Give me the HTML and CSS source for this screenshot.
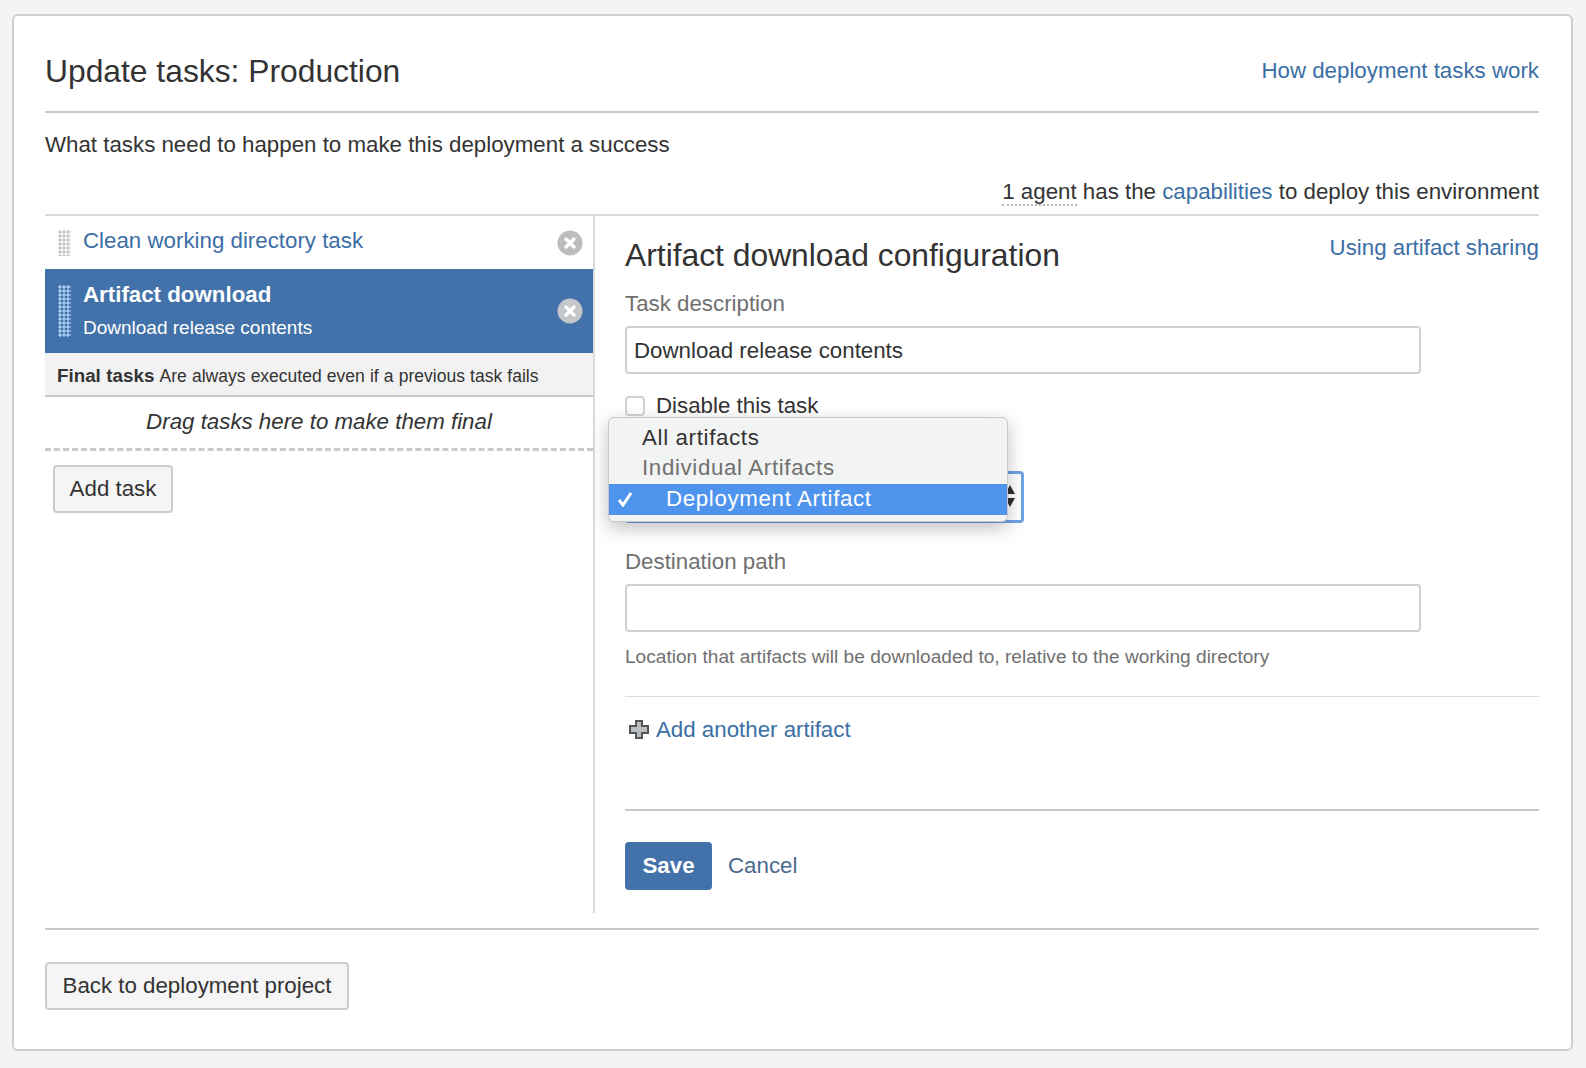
FILE: index.html
```html
<!DOCTYPE html>
<html lang="en">
<head>
    <meta charset="UTF-8">
    <meta name="viewport" content="width=device-width, initial-scale=1.0">
    <title>Update tasks: Production</title>
    <link rel="stylesheet" href="styles.css">
</head>
<body>

    <div class="card">
        <div class="page-head">
            <h1>Update tasks: Production</h1>
            <a href="#" class="link">How deployment tasks work</a>
        </div>

        <p class="intro">What tasks need to happen to make this deployment a success</p>
        <p class="agents"><span class="dotted">1 agent</span> has the <a href="#" class="link">capabilities</a> to deploy this environment</p>

        <div class="columns">
            <div class="task-col">
                <div class="task-row">
                    <span class="handle"></span>
                    <span class="task-name">Clean working directory task</span>
                    <span class="remove">
                        <svg width="26" height="26" viewBox="0 0 26 26"><circle cx="13" cy="13" r="12.5" fill="#bdbdbd"/><path d="M9 9l8 8M17 9l-8 8" stroke="#fff" stroke-width="3.4" stroke-linecap="round"/></svg>
                    </span>
                </div>
                <div class="task-row selected">
                    <span class="handle"></span>
                    <div class="task-text">
                        <strong>Artifact download</strong>
                        <small>Download release contents</small>
                    </div>
                    <span class="remove">
                        <svg width="26" height="26" viewBox="0 0 26 26"><circle cx="13" cy="13" r="12.5" fill="#c4c7ca"/><path d="M9 9l8 8M17 9l-8 8" stroke="#fff" stroke-width="3.4" stroke-linecap="round"/></svg>
                    </span>
                </div>
                <div class="final-head"><b>Final tasks</b> Are always executed even if a previous task fails</div>
                <div class="final-drop">Drag tasks here to make them final</div>
                <button type="button" class="btn add-task">Add task</button>
            </div>

            <div class="config-col">
                <div class="config-head">
                    <h2>Artifact download configuration</h2>
                    <a href="#" class="link">Using artifact sharing</a>
                </div>

                <label class="field-label">Task description</label>
                <div class="text-input">Download release contents</div>

                <div class="check-row">
                    <span class="checkbox"></span>
                    <span>Disable this task</span>
                </div>

                <div class="select-box">
                    <span class="select-arrows">
                        <svg width="10" height="22" viewBox="0 0 10 22"><path d="M5 0l5 9H0zM5 22L0 13h10z" fill="#333"/></svg>
                    </span>
                    <div class="dropdown">
                        <div class="opt">All artifacts</div>
                        <div class="opt group">Individual Artifacts</div>
                        <div class="opt active">
                            <svg class="tick" width="16" height="16" viewBox="0 0 16 16"><path d="M2 9l4 5 8-12" fill="none" stroke="#fff" stroke-width="3"/></svg>
                            Deployment Artifact
                        </div>
                    </div>
                </div>

                <label class="field-label dest-label">Destination path</label>
                <div class="text-input"></div>
                <p class="hint">Location that artifacts will be downloaded to, relative to the working directory</p>

                <div class="add-row">
                    <svg width="20" height="19" viewBox="0 0 20 19"><path d="M7 1h6v5h6v7h-6v5H7v-5H1V6h6z" fill="#b9bdc0" stroke="#555" stroke-width="2"/></svg>
                    <a href="#" class="link">Add another artifact</a>
                </div>

                <div class="form-actions">
                    <button type="button" class="save">Save</button>
                    <a href="#" class="cancel">Cancel</a>
                </div>
            </div>
        </div>

        <div class="page-foot">
            <button type="button" class="btn">Back to deployment project</button>
        </div>
    </div>

</body>
</html>
```

FILE: styles.css
```css
* {
    box-sizing: border-box;
}
body {
    margin: 0;
    height: 1068px;
    overflow: hidden;
    background-color: #f3f5f5;
    color: #333;
    font-family: "Liberation Sans", Arial, sans-serif;
    font-size: 22.3px;
}
.link {
    color: #3b6ea5;
    text-decoration: none;
}
.card {
    width: 1561px;
    height: 1037px;
    margin: 14px 0 0 12px;
    padding: 0 32px 0 31px;
    background-color: #fff;
    border: 2px solid #ccd0d3;
    border-radius: 6px;
}
.page-head {
    height: 97px;
    padding-top: 36px;
    display: flex;
    justify-content: space-between;
    align-items: flex-start;
    border-bottom: 2px solid #c6cacd;
}
h1 {
    margin: 0;
    font-size: 31.8px;
    line-height: 38px;
    font-weight: normal;
}
.page-head .link {
    line-height: 38px;
}
.intro {
    margin: 19px 0 0;
    line-height: 26px;
}
.agents {
    margin: 21px 0 0;
    line-height: 26px;
    text-align: right;
}
.dotted {
    border-bottom: 2px dotted #b5b5b5;
}
.columns {
    height: 699px;
    margin-top: 9px;
    display: flex;
    border-top: 2px solid #d8dadc;
}
.task-col {
    width: 550px;
    flex: none;
    border-right: 2px solid #d8dadc;
}
.task-row {
    height: 53px;
    padding-left: 13px;
    display: flex;
    align-items: center;
    color: #3b6ea5;
}
.task-name {
    margin-left: 12px;
    padding-bottom: 3px;
}
.task-row .handle {
    width: 13px;
    height: 26px;
    flex: none;
    background-image: radial-gradient(#c3c7ca 1.5px, transparent 1.7px);
    background-size: 4px 4px;
}
.task-row .remove {
    margin-left: auto;
    margin-right: 10px;
    height: 26px;
}
.task-row.selected {
    height: 84px;
    color: #fff;
    background-color: #4272a9;
}
.task-row.selected .handle {
    height: 52px;
    background-image: radial-gradient(#a9cdf0 1.5px, transparent 1.7px);
}
.task-text {
    margin-left: 12px;
    padding-bottom: 2px;
}
.task-text strong {
    display: block;
    line-height: 32px;
}
.task-text small {
    display: block;
    margin-top: 3px;
    font-size: 19px;
    line-height: 28px;
}
.final-head {
    height: 44px;
    padding-left: 12px;
    line-height: 46px;
    font-size: 17.5px;
    word-spacing: 0.3px;
    background-color: #f2f2f2;
    border-bottom: 2px solid #c6cacd;
}
.final-head b {
    font-size: 18.8px;
    margin-right: 1px;
}
.final-drop {
    height: 54px;
    line-height: 50px;
    text-align: center;
    font-style: italic;
    border-bottom: 3px dashed #c6cacd;
}
.btn {
    height: 48px;
    padding: 0 16px;
    color: #333;
    font-family: inherit;
    font-size: 22.3px;
    background-color: #f5f5f5;
    border: 2px solid #ccc;
    border-radius: 4px;
}
.add-task {
    width: 120px;
    margin: 14px 0 0 8px;
    padding: 0;
}
.config-col {
    flex: 1;
    padding-left: 30px;
}
.config-head {
    height: 67px;
    display: flex;
    justify-content: space-between;
    align-items: flex-start;
}
h2 {
    margin: 21px 0 0;
    font-size: 31.8px;
    line-height: 36px;
    font-weight: normal;
}
.config-head .link {
    margin-top: 19px;
    line-height: 26px;
}
.field-label {
    display: block;
    margin-top: 8px;
    line-height: 26px;
    color: #707070;
}
.text-input {
    width: 796px;
    height: 48px;
    margin-top: 9px;
    padding-left: 7px;
    line-height: 46px;
    border: 2px solid #d0d0d0;
    border-radius: 4px;
}
.check-row {
    height: 26px;
    margin-top: 19px;
    display: flex;
    align-items: center;
    gap: 11px;
}
.checkbox {
    width: 20px;
    height: 20px;
    border: 2px solid #d2d2d2;
    border-radius: 4px;
}
.select-box {
    position: relative;
    width: 399px;
    height: 52px;
    margin-top: 52px;
    border: 3px solid #6da3e6;
    border-radius: 4px;
}
.select-arrows {
    position: absolute;
    right: 6px;
    top: 11px;
}
.dropdown {
    position: absolute;
    left: -20px;
    top: -57px;
    width: 400px;
    height: 105px;
    padding-top: 5px;
    background-color: #f2f3f3;
    border: 1px solid #c8c8c8;
    border-radius: 6px;
    box-shadow: 0 6px 18px rgba(0, 0, 0, 0.25);
}
.opt {
    position: relative;
    height: 30px;
    padding-left: 33px;
    line-height: 30px;
    letter-spacing: 0.65px;
}
.opt.group {
    height: 31px;
    color: #707070;
}
.opt.active {
    height: 31px;
    padding-left: 57px;
    color: #fff;
    background-color: #4f94ec;
}
.tick {
    position: absolute;
    left: 8px;
    top: 7px;
}
.dest-label {
    margin-top: 26px;
}
.hint {
    margin: 12px 0 0;
    font-size: 19.1px;
    line-height: 26px;
    color: #707070;
}
.add-row {
    height: 115px;
    margin-top: 26px;
    padding-top: 20px;
    display: flex;
    align-items: flex-start;
    gap: 7px;
    padding-left: 4px;
    border-top: 1px solid #d8dadc;
    border-bottom: 2px solid #c6cacd;
}
.add-row svg {
    margin-top: 3px;
}
.form-actions {
    margin-top: 31px;
    display: flex;
    align-items: center;
    gap: 16px;
}
.save {
    width: 87px;
    height: 48px;
    color: #fff;
    font-family: inherit;
    font-size: 22.3px;
    font-weight: bold;
    background-color: #4272a9;
    border: none;
    border-radius: 4px;
}
.cancel {
    color: #4a6a8c;
    text-decoration: none;
}
.page-foot {
    margin-top: 15px;
    padding-top: 32px;
    border-top: 2px solid #c6cacd;
}
.page-foot .btn {
    width: 304px;
    padding: 0;
}
```
